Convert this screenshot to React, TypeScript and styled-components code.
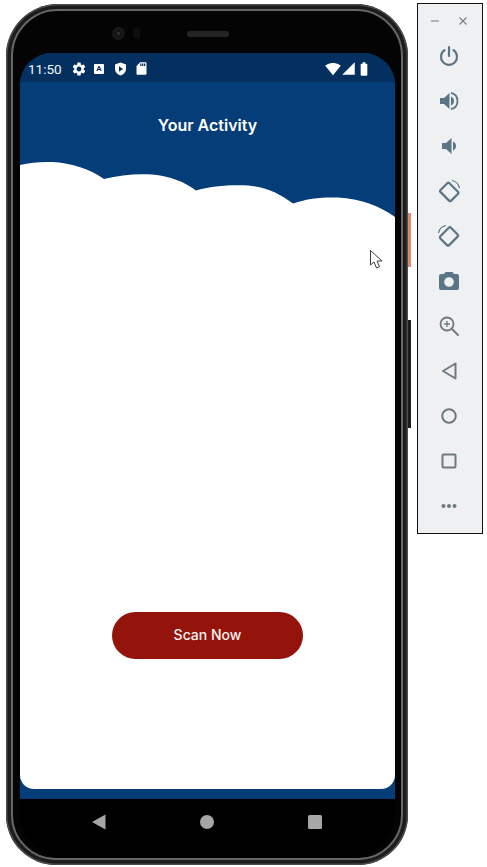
import React from "react";
import styled, { createGlobalStyle } from "styled-components";
import { MdSettings, MdSdCard, MdSignalCellular4Bar, MdSignalWifi4Bar, MdBatteryFull } from "react-icons/md";

const Global = createGlobalStyle`
  html, body { margin: 0; padding: 0; background: #fff; width: 487px; height: 867px; overflow: hidden; }
  * { box-sizing: border-box; }
`;

const Page = styled.div`
  position: relative;
  width: 487px;
  height: 867px;
  display: flex;
  align-items: flex-start;
  padding: 4px 0 0 6px;
  font-family: Roboto, "Liberation Sans", sans-serif;
`;

const Phone = styled.div`
  position: relative;
  width: 402px;
  height: 861px;
  padding: 5px;
  border-radius: 52px 52px 50px 50px;
  background: #1c1c1c;
  box-shadow: inset 0 0 0 1.5px #4c4c4c;
  flex: none;
`;

const SideButton = styled.div<{ $top: number; $height: number; $color: string }>`
  position: absolute;
  right: -3px;
  top: ${(p) => p.$top}px;
  width: 3px;
  height: ${(p) => p.$height}px;
  background: ${(p) => p.$color};
`;

const Bezel = styled.div`
  width: 100%;
  height: 100%;
  border: 2px solid #666;
  border-radius: 47px 47px 45px 45px;
  background: #040404;
  padding: 0 6px 0 7px;
  display: flex;
  flex-direction: column;
`;

const TopBezel = styled.div`
  height: 42px;
  flex: none;
  display: flex;
  align-items: center;
  padding: 3px 0 0 92px;
`;

const Camera = styled.div`
  width: 13px;
  height: 13px;
  border-radius: 50%;
  background: radial-gradient(circle, #333 0 1px, #141414 2px, #1e1e1e 100%);
`;

const Sensor = styled.div`
  width: 7px;
  height: 11px;
  border-radius: 3px;
  margin-left: 8px;
  background: #0e0e0e;
`;

const Speaker = styled.div`
  width: 42px;
  height: 6px;
  border-radius: 3px;
  margin-left: 47px;
  background: #242424;
`;

const Screen = styled.div`
  height: 746px;
  flex: none;
  border-radius: 32px 32px 0 0;
  overflow: hidden;
  background: #053d78;
  display: flex;
  flex-direction: column;
  padding-bottom: 10px;
`;

const StatusBar = styled.div`
  height: 29px;
  flex: none;
  background: #04305f;
  display: flex;
  align-items: center;
  padding: 2px 23px 0 8px;
  color: #f2f6fa;
`;

const Time = styled.span`
  font-size: 13.5px;
  width: 42px;
`;

const StatusIcons = styled.div`
  display: flex;
  align-items: center;
  gap: 7px;
  margin-left: 1px;
`;

const SmallBox = styled.span`
  width: 10px;
  height: 10px;
  border-radius: 1px;
  background: #fff;
  color: #04305f;
  font-size: 8px;
  font-weight: 700;
  line-height: 10px;
  text-align: center;
  margin-right: 3px;
`;

const Spacer = styled.div`
  flex: 1;
`;

const SystemIcons = styled.div`
  display: flex;
  align-items: center;
`;

const TitleBar = styled.div`
  height: 77px;
  flex: none;
  display: flex;
  justify-content: center;
  padding-top: 32px;
  color: #fff;
  font-family: Inter, Roboto, sans-serif;
  font-size: 16px;
  font-weight: 600;
  line-height: 22px;
`;

const Wave = styled.svg`
  display: block;
  flex: none;
  width: 375px;
  height: 60px;
  margin-bottom: -1px;
`;

const Body = styled.div`
  flex: 1;
  background: #fff;
  border-radius: 0 0 14px 14px;
  display: flex;
  flex-direction: column;
  align-items: center;
  justify-content: flex-end;
  padding-bottom: 130px;
`;

const ScanButton = styled.button`
  width: 191px;
  height: 47px;
  padding: 0 0 2px;
  border: none;
  border-radius: 24px;
  background: #94140b;
  color: #fbf3f2;
  font-family: Inter, Roboto, sans-serif;
  font-size: 14px;
  font-weight: 500;
`;

const NavBar = styled.div`
  flex: 1;
  display: flex;
  align-items: flex-start;
  padding: 15px 0 0 71px;
  background: #000;
  border-radius: 0 0 44px 44px;
`;

const NavIcon = styled.svg<{ $gap: number }>`
  display: block;
  width: 16px;
  height: 16px;
  margin-right: ${(p) => p.$gap}px;
  fill: #a6a6a6;
`;

const Toolbar = styled.aside`
  flex: none;
  width: 66px;
  height: 531px;
  margin: -1px 0 0 9px;
  border: 1px solid #111;
  background: #eff0f1;
  display: flex;
  flex-direction: column;
  align-items: center;
`;

const WindowRow = styled.div`
  width: 100%;
  height: 29px;
  flex: none;
  display: flex;
  align-items: center;
  justify-content: space-between;
  padding: 4px 14px 0 12px;
`;

const ToolButton = styled.div`
  width: 100%;
  height: 45px;
  flex: none;
  display: flex;
  align-items: center;
  justify-content: center;
  padding-right: 2px;
`;

const ToolIcon = styled.svg`
  width: 24px;
  height: 24px;
  display: block;
`;

const WinIcon = styled.svg`
  width: 10px;
  height: 10px;
  display: block;
  stroke: #76828a;
  stroke-width: 1.1;
  fill: none;
`;

const Cursor = styled.svg`
  position: absolute;
  left: 369px;
  top: 249px;
  width: 15px;
  height: 21px;
`;

const teal = "#5a7585";
const grey = "#6e7a82";

function Tool({ children }: { children: React.ReactNode }) {
  return (
    <ToolButton>
      <ToolIcon viewBox="0 0 24 24">{children}</ToolIcon>
    </ToolButton>
  );
}

export default function App() {
  return (
    <Page>
      <Global />
      <Phone>
        <SideButton $top={209} $height={54} $color="#e08a6c" />
        <SideButton $top={316} $height={108} $color="#1c1c1c" />
        <Bezel>
          <TopBezel>
            <Camera />
            <Sensor />
            <Speaker />
          </TopBezel>
          <Screen>
            <StatusBar>
              <Time>11:50</Time>
              <StatusIcons>
                <MdSettings size={16} color="#fff" />
                <SmallBox>A</SmallBox>
                <svg width="13" height="14" viewBox="0 0 13 14">
                  <path fill="#fff" d="M6.5 0.5 12 2.5v4.5c0 3-2.4 5.4-5.5 6.5C3.400 12.400 1 10 1 7V2.500z" />
                  <path fill="#04305f" d="M5 4.300 9 7 5 9.700z" />
                </svg>
                <MdSdCard size={15} color="#fff" />
              </StatusIcons>
              <Spacer />
              <SystemIcons>
                <MdSignalWifi4Bar size={16} color="#fff" />
                <MdSignalCellular4Bar size={15} color="#fff" />
                <MdBatteryFull size={16} color="#fff" />
              </SystemIcons>
            </StatusBar>
            <TitleBar>Your Activity</TitleBar>
            <Wave viewBox="0 0 375 60" preserveAspectRatio="none">
              <path
                fill="#fff"
                d="M0 6 C10 3.500 22 2.500 32 3 C52 4 70 10 84 20 C100 15.500 118 14.500 132 15.500 C150 17 165 23 176 31.500 C190 27 212 25.500 228 26.500 C247 28 260 35 273 44.500 C288 39 304 38 318 38.500 C340 39.500 360 47 375 58 L375 60 L0 60 Z"
              />
            </Wave>
            <Body>
              <ScanButton>Scan Now</ScanButton>
            </Body>
          </Screen>
          <NavBar>
            <NavIcon $gap={92} viewBox="0 0 16 16"><path d="M14.500 0.500v15L1 8z" /></NavIcon>
            <NavIcon $gap={92} viewBox="0 0 16 16"><circle cx="8" cy="8" r="7" /></NavIcon>
            <NavIcon $gap={0} viewBox="0 0 16 16"><rect x="1" y="1" width="14" height="14" rx="1.500" /></NavIcon>
          </NavBar>
        </Bezel>
      </Phone>
      <Toolbar>
        <WindowRow>
          <WinIcon viewBox="0 0 10 10"><path d="M1 5h8" /></WinIcon>
          <WinIcon viewBox="0 0 10 10"><path d="M1.500 1.500l7 7M8.500 1.500l-7 7" /></WinIcon>
        </WindowRow>
        <Tool>
          <path fill="none" stroke={teal} strokeWidth="2.200" strokeLinecap="round" d="M12 3v9M7.500 6.200a8 8 0 1 0 9 0" />
        </Tool>
        <Tool>
          <path fill={teal} d="M3 9v6h4l5.500 5V4L7 9z" />
          <path fill={teal} d="M14 7.500v9c2-.8 3-2.600 3-4.500s-1-3.700-3-4.500z" />
          <path fill="none" stroke={teal} strokeWidth="1.800" d="M14 3.800c4 .9 6.500 4.200 6.500 8.200s-2.500 7.300-6.500 8.200" />
        </Tool>
        <Tool>
          <path fill={teal} d="M5 9v6h4l5.500 5V4L9 9z" />
          <path fill={teal} d="M16 7.500v9c2-.8 3-2.600 3-4.500s-1-3.700-3-4.500z" />
        </Tool>
        <Tool>
          <rect x="6" y="5.500" width="12.500" height="15" rx="1.500" fill="none" stroke={teal} strokeWidth="2.200" transform="rotate(-45 12.200 13)" />
          <path fill="none" stroke={teal} strokeWidth="1.200" d="M15 1.500c4 .8 6.600 3.500 7.500 7.500" />
        </Tool>
        <Tool>
          <rect x="5.500" y="5.500" width="12.500" height="15" rx="1.500" fill="none" stroke={teal} strokeWidth="2.200" transform="rotate(45 12.500 13)" />
          <path fill="none" stroke={teal} strokeWidth="1.200" d="M9 1.500C5 2.300 2.300 5 1.500 9" />
        </Tool>
        <Tool>
          <path
            fill={teal}
            fillRule="evenodd"
            d="M8.500 3 7 5H4a2 2 0 0 0-2 2v12a2 2 0 0 0 2 2h16a2 2 0 0 0 2-2V7a2 2 0 0 0-2-2h-3l-1.500-2zM12 8.200a4.800 4.800 0 1 1 0 9.600 4.800 4.800 0 0 1 0-9.600z"
          />
        </Tool>
        <Tool>
          <circle cx="10" cy="10" r="6.500" fill="none" stroke={grey} strokeWidth="1.800" />
          <path fill="none" stroke={grey} strokeWidth="2" strokeLinecap="round" d="M15 15l6 6" />
          <path fill="none" stroke={grey} strokeWidth="1.300" d="M10 7v6M7 10h6" />
        </Tool>
        <Tool>
          <path fill="none" stroke={grey} strokeWidth="2" strokeLinejoin="round" d="M18.500 4.500v15L6 12z" />
        </Tool>
        <Tool>
          <circle cx="12" cy="12" r="6.800" fill="none" stroke={grey} strokeWidth="2" />
        </Tool>
        <Tool>
          <rect x="5.500" y="5.500" width="13" height="13" rx="1" fill="none" stroke={grey} strokeWidth="2" />
        </Tool>
        <Tool>
          <circle cx="6.500" cy="12" r="2" fill={grey} />
          <circle cx="12" cy="12" r="2" fill={grey} />
          <circle cx="17.500" cy="12" r="2" fill={grey} />
        </Tool>
      </Toolbar>
      <Cursor viewBox="0 0 15 21">
        <path fill="#fff" stroke="#3a3a3a" strokeWidth="1" d="M1.500 1.500v14.500l3.500-3 2.500 6 3-1.300-2.500-5.700h5z" />
      </Cursor>
    </Page>
  );
}
